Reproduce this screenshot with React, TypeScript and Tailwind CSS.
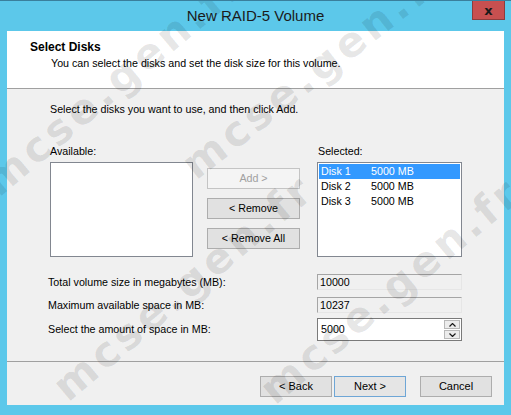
const ui = "[font-family:'Liberation_Sans',Arial,sans-serif]";
const mark =
  "pointer-events-none select-none absolute whitespace-nowrap text-[42px] leading-none font-bold tracking-[4px] text-black/[0.1] origin-[0_35px] [font-family:'DejaVu_Sans',sans-serif]";

function Chevron({ up }: { up?: boolean }) {
  return (
    <svg width="7" height="4" viewBox="0 0 7 4" className="block">
      <polyline
        points={up ? "0.5,3.5 3.5,0.5 6.5,3.5" : "0.5,0.5 3.5,3.5 6.5,0.5"}
        fill="none"
        stroke="#1a1a1a"
        strokeWidth="1.2"
      />
    </svg>
  );
}

const disks = [
  { name: "Disk 1", size: "5000 MB" },
  { name: "Disk 2", size: "5000 MB" },
  { name: "Disk 3", size: "5000 MB" },
];

export default function App() {
  return (
    <div className={`relative w-[511px] h-[415px] overflow-hidden bg-[#5cc8ea] border-t border-[#3a7f9c] flex flex-col text-black ${ui}`}>
      {/* title bar */}
      <div className="grid grid-cols-[1fr_auto_1fr] h-[30px] shrink-0">
        <div />
        <div className="flex items-center text-[15px] text-[#1b1b1b]">New RAID-5 Volume</div>
        <div className="flex justify-end items-start pr-[6px]">
          <div className="w-[33px] h-[19px] bg-[#c75050] border-l border-b border-r border-[#8c3d3d] flex items-center justify-center text-[13px] font-bold leading-none text-[#1a1a1a] [font-family:'DejaVu_Sans',sans-serif]">
            x
          </div>
        </div>
      </div>

      {/* client area */}
      <div className="mx-[7px] h-[374px] shrink-0 flex flex-col bg-[#f0f0f0] text-[10.7px]">
        <div className="h-[58px] bg-white border-b border-[#a0a0a0] pl-[23px] pt-[9px]">
          <div className="text-[12px] font-bold leading-[14px]">Select Disks</div>
          <div className="pl-[21px] mt-[2px] leading-[14px]">
            You can select the disks and set the disk size for this volume.
          </div>
        </div>

        <div className="flex-1 pl-[43px] pt-[13px]">
          <div className="leading-[14px]">Select the disks you want to use, and then click Add.</div>

          <div className="flex mt-[28px]">
            <div className="w-[143px]">
              <div className="leading-[14px]">Available:</div>
              <div className="mt-[4px] h-[95px] bg-white border border-[#828790]" />
            </div>

            <div className="ml-[14px] w-[93px] pt-[24px] flex flex-col gap-[9px]">
              <button className="h-[21px] bg-[#f4f4f4] border border-[#c4c4c4] text-[#a0a0a0]">Add &gt;</button>
              <button className="h-[21px] bg-[#e1e1e1] border border-[#adadad]">&lt; Remove</button>
              <button className="h-[21px] bg-[#e1e1e1] border border-[#adadad]">&lt; Remove All</button>
            </div>

            <div className="ml-[17px] w-[145px]">
              <div className="leading-[14px] pl-[1px]">Selected:</div>
              <div className="mt-[4px] h-[95px] bg-white border border-[#828790] p-[1px]">
                {disks.map((d, i) => (
                  <div
                    key={d.name}
                    className={`flex h-[15px] items-center leading-[15px] pl-[2px] ${i === 0 ? "bg-[#3399ff] text-white" : ""}`}
                  >
                    <span className="w-[50px]">{d.name}</span>
                    <span>{d.size}</span>
                  </div>
                ))}
              </div>
            </div>
          </div>

          <div className="-ml-[2px] mt-[17px] grid grid-cols-[269px_145px]">
            <div className="h-[16px] flex items-center">Total volume size in megabytes (MB):</div>
            <div className="h-[16px] flex items-center pl-[2px] border border-t-[#a5a5a5] border-l-[#a5a5a5] border-r-[#e6e6e6] border-b-[#e6e6e6] bg-[#f0f0f0]">
              10000
            </div>

            <div className="mt-[7px] h-[16px] flex items-center">Maximum available space in MB:</div>
            <div className="mt-[7px] h-[16px] flex items-center pl-[2px] border border-t-[#a5a5a5] border-l-[#a5a5a5] border-r-[#e6e6e6] border-b-[#e6e6e6] bg-[#f0f0f0]">
              10237
            </div>

            <div className="mt-[5px] h-[23px] flex items-center">Select the amount of space in MB:</div>
            <div className="mt-[5px] h-[23px] flex bg-white border border-[#7a7a7a]">
              <div className="flex-1 flex items-center pl-[3px]">5000</div>
              <div className="w-[18px] flex flex-col gap-[1px] p-[1px]">
                <div className="flex-1 flex items-center justify-center bg-[#ececec] border border-[#b8b8b8]">
                  <Chevron up />
                </div>
                <div className="flex-1 flex items-center justify-center bg-[#ececec] border border-[#b8b8b8]">
                  <Chevron />
                </div>
              </div>
            </div>
          </div>
        </div>

        <div className="h-[44px] border-t border-[#a0a0a0] pt-[14px] pr-[12px] flex justify-end items-start text-[11px]">
          <button className="w-[72px] h-[21px] bg-[#e1e1e1] border border-[#adadad]">&lt; Back</button>
          <button className="ml-[2px] w-[72px] h-[21px] bg-[#e5e5e5] border border-[#6ea6d6]">Next &gt;</button>
          <button className="ml-[14px] w-[72px] h-[21px] bg-[#e1e1e1] border border-[#adadad]">Cancel</button>
        </div>
      </div>

      {/* watermark */}
      <span className={`${mark} -rotate-[40deg] -left-[1px] top-[162px]`}>mcse.gen.fr</span>
      <span className={`${mark} -rotate-[38deg] left-[196px] top-[145px]`}>mcse.gen.fr</span>
      <span className={`${mark} -rotate-[40deg] left-[68px] top-[367px]`}>mcse.gen.fr</span>
      <span className={`${mark} -rotate-[40deg] left-[275px] top-[370px]`}>mcse.gen.fr</span>
    </div>
  );
}
